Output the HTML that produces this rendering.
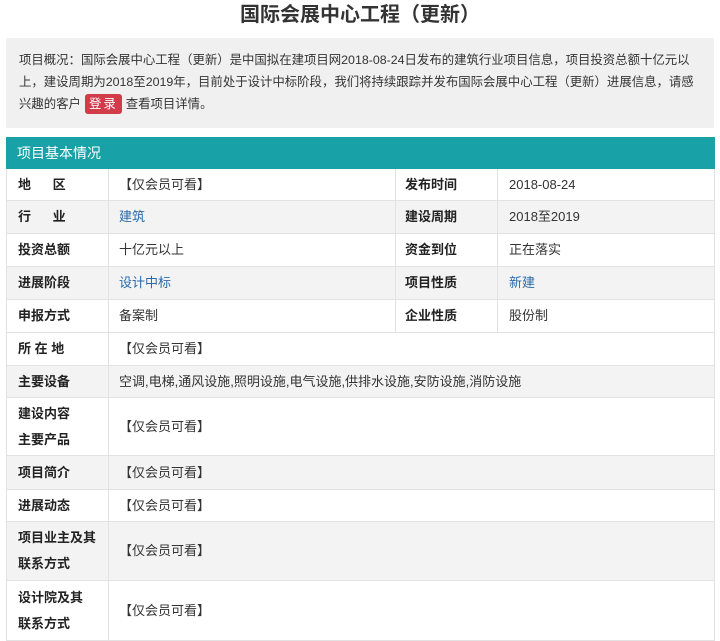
<!DOCTYPE html>
<html><head><meta charset="utf-8">
<style>
*{margin:0;padding:0;box-sizing:border-box}
body{width:720px;height:634px;overflow:hidden;background:#fff;font-family:"Liberation Sans","Noto Sans CJK SC",sans-serif;color:#333;position:relative}
.title{position:absolute;top:2px;left:0;width:720px;text-align:center;font-size:20px;font-weight:bold;color:#333;line-height:26px}
.intro{position:absolute;left:6px;top:38px;width:708px;height:90px;background:#f0f0f1;font-size:12.4px;line-height:22px;padding:11px 0 0 13px;white-space:nowrap;color:#333;overflow:hidden}
.btn{display:inline-block;background:#d33a4a;color:#fff;border-radius:3px;padding:0 4px;line-height:20px;margin:0 4px;letter-spacing:2px}
.hd{position:absolute;left:6px;top:137px;width:709px;height:32px;background:#18a2a8;color:#fff;font-size:14px;line-height:32px;padding-left:11px}
.r{position:absolute;left:6px;width:709px;border-bottom:1px solid #e2e2e2;border-left:1px solid #e2e2e2;border-right:1px solid #e2e2e2;font-size:13px}
.g{background:#f3f3f4}
.c{position:absolute;top:0;height:100%;display:flex;align-items:center;line-height:26px}
.l{left:11px;font-weight:bold;color:#222}
.v{left:112px}
.d{position:absolute;top:0;height:100%;border-left:1px solid #e2e2e2}
.a{color:#2a6aa8}
</style></head><body>
<div class="title">国际会展中心工程（更新）</div>
<div class="intro">项目概况：国际会展中心工程（更新）是中国拟在建项目网2018-08-24日发布的建筑行业项目信息，项目投资总额十亿元以<br>上，建设周期为2018至2019年，目前处于设计中标阶段，我们将持续跟踪并发布国际会展中心工程（更新）进展信息，请感<br>兴趣的客户<span class="btn">登录</span>查看项目详情。</div>
<div class="hd">项目基本情况</div>

<div class="r" style="top:169px;height:32px"><div class="d" style="left:101px"></div><div class="d" style="left:388px"></div><div class="d" style="left:490px"></div>
<div class="c l">地&nbsp;&nbsp;&nbsp;&nbsp;&nbsp;&nbsp;区</div><div class="c v">【仅会员可看】</div><div class="c l" style="left:398px">发布时间</div><div class="c" style="left:502px">2018-08-24</div></div>

<div class="r g" style="top:201px;height:33px"><div class="d" style="left:101px"></div><div class="d" style="left:388px"></div><div class="d" style="left:490px"></div>
<div class="c l">行&nbsp;&nbsp;&nbsp;&nbsp;&nbsp;&nbsp;业</div><div class="c v a">建筑</div><div class="c l" style="left:398px">建设周期</div><div class="c" style="left:502px">2018至2019</div></div>

<div class="r" style="top:234px;height:33px"><div class="d" style="left:101px"></div><div class="d" style="left:388px"></div><div class="d" style="left:490px"></div>
<div class="c l">投资总额</div><div class="c v">十亿元以上</div><div class="c l" style="left:398px">资金到位</div><div class="c" style="left:502px">正在落实</div></div>

<div class="r g" style="top:267px;height:33px"><div class="d" style="left:101px"></div><div class="d" style="left:388px"></div><div class="d" style="left:490px"></div>
<div class="c l">进展阶段</div><div class="c v a">设计中标</div><div class="c l" style="left:398px">项目性质</div><div class="c a" style="left:502px">新建</div></div>

<div class="r" style="top:300px;height:33px"><div class="d" style="left:101px"></div><div class="d" style="left:388px"></div><div class="d" style="left:490px"></div>
<div class="c l">申报方式</div><div class="c v">备案制</div><div class="c l" style="left:398px">企业性质</div><div class="c" style="left:502px">股份制</div></div>

<div class="r" style="top:333px;height:33px"><div class="d" style="left:101px"></div>
<div class="c l">所&nbsp;在&nbsp;地</div><div class="c v">【仅会员可看】</div></div>

<div class="r g" style="top:366px;height:32px"><div class="d" style="left:101px"></div>
<div class="c l">主要设备</div><div class="c v">空调,电梯,通风设施,照明设施,电气设施,供排水设施,安防设施,消防设施</div></div>

<div class="r" style="top:398px;height:58px"><div class="d" style="left:101px"></div>
<div class="c l">建设内容<br>主要产品</div><div class="c v">【仅会员可看】</div></div>

<div class="r g" style="top:456px;height:34px"><div class="d" style="left:101px"></div>
<div class="c l">项目简介</div><div class="c v">【仅会员可看】</div></div>

<div class="r" style="top:490px;height:32px"><div class="d" style="left:101px"></div>
<div class="c l">进展动态</div><div class="c v">【仅会员可看】</div></div>

<div class="r g" style="top:522px;height:59px"><div class="d" style="left:101px"></div>
<div class="c l">项目业主及其<br>联系方式</div><div class="c v">【仅会员可看】</div></div>

<div class="r" style="top:581px;height:60px"><div class="d" style="left:101px"></div>
<div class="c l">设计院及其<br>联系方式</div><div class="c v">【仅会员可看】</div></div>
</body></html>
